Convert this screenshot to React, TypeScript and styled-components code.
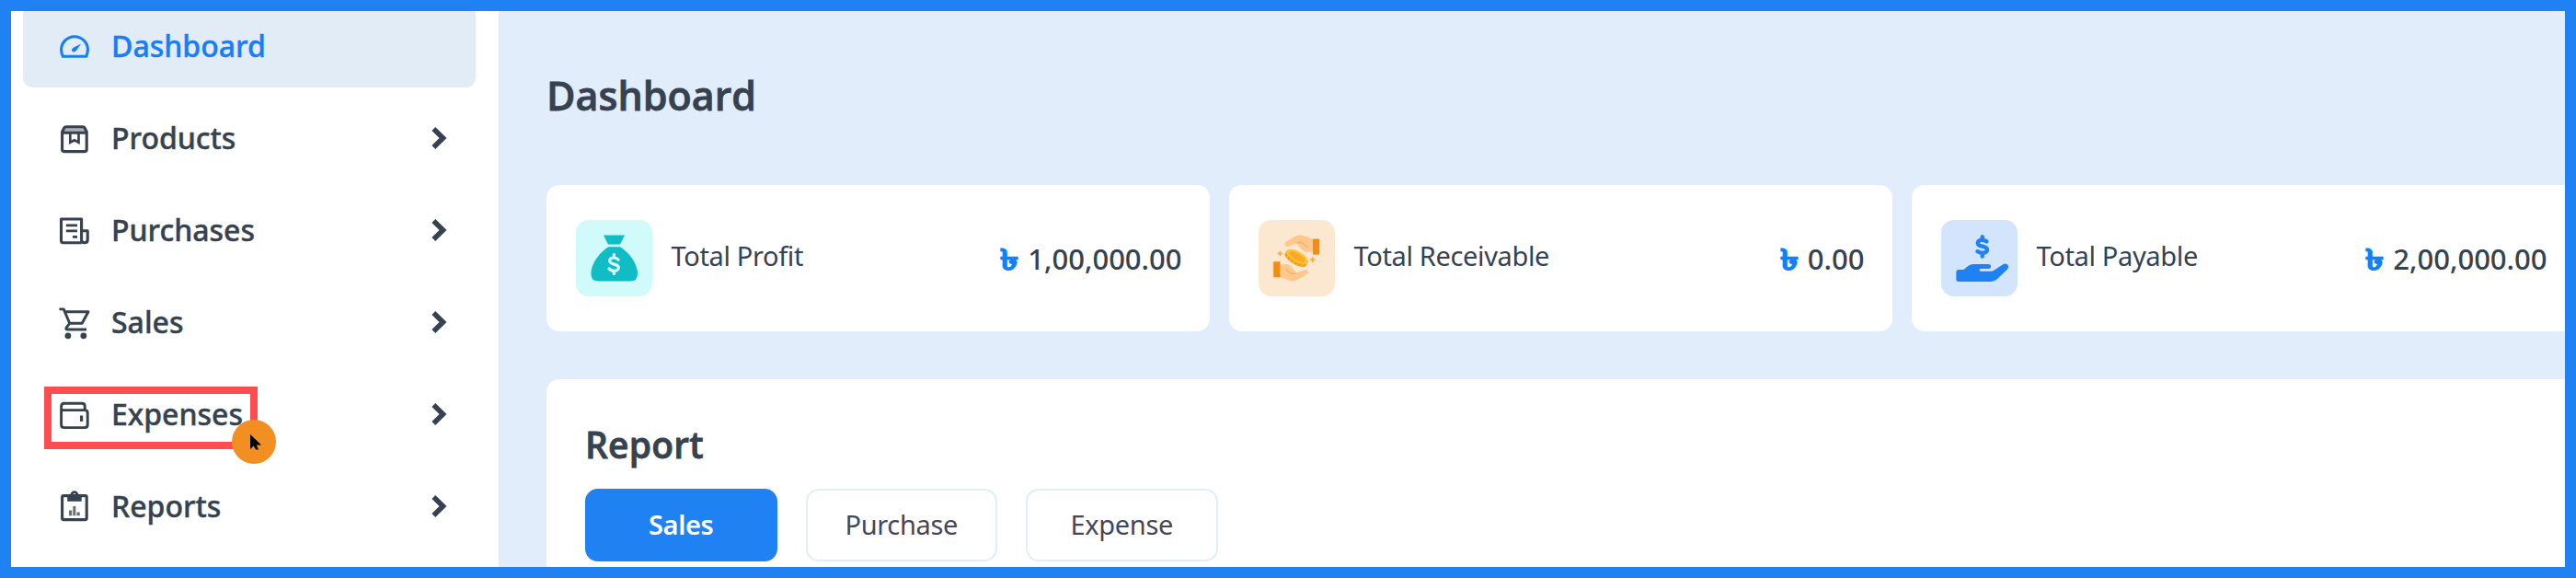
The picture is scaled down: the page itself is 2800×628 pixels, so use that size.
import React from "react";
import styled, { createGlobalStyle } from "styled-components";

const GlobalStyle = createGlobalStyle`
  * { box-sizing: border-box; }
  body { margin: 0; }
`;

const ink = "#36424f";
const blue = "#2082f2";

const Frame = styled.div`
  width: 2800px;
  height: 628px;
  border: 12px solid ${blue};
  display: flex;
  overflow: hidden;
  background: #fff;
  color: ${ink};
  font-family: "Noto Sans", "Open Sans", sans-serif;
`;

const Sidebar = styled.nav`
  flex: none;
  width: 531px;
  height: 604px;
  padding: 0 25px 0 13px;
  background: #fff;
  border-right: 1px solid #e6ebf0;
`;

const Menu = styled.div`
  display: flex;
  flex-direction: column;
  gap: 10px;
  margin-top: -7px;
`;

const MenuItem = styled.div<{ $active?: boolean }>`
  position: relative;
  flex: none;
  height: 90px;
  padding: 0 31px 0 38px;
  display: flex;
  align-items: center;
  border-radius: 10px;
  background: ${(p) => (p.$active ? "#e2ecf7" : "transparent")};
  color: ${(p) => (p.$active ? "#167dfb" : ink)};
`;

const MenuIcon = styled.svg`
  flex: none;
  width: 36px;
  height: 36px;
  overflow: visible;
`;

const MenuLabel = styled.span`
  flex: 1;
  margin-left: 22px;
  font-size: 32px;
  line-height: 44px;
  font-weight: 500;
  -webkit-text-stroke: 0.4px currentColor;
`;

const Chevron = styled.svg`
  flex: none;
  width: 18px;
  height: 26px;
`;

const Highlight = styled.div`
  position: absolute;
  left: 23px;
  top: 15px;
  width: 232px;
  height: 68px;
  border: 8px solid #ff4c51;
`;

const Pointer = styled.div`
  position: absolute;
  right: -28px;
  bottom: -24px;
  width: 48px;
  height: 48px;
  border-radius: 50%;
  background: #f28f22;

  svg {
    display: block;
  }
`;

const Main = styled.main`
  flex: none;
  width: 2245px;
  height: 604px;
  padding-left: 51px;
  background: #e1edfb;
  overflow: hidden;
`;

const PageTitle = styled.h1`
  margin: 0;
  height: 189px;
  padding-top: 62px;
  font-family: "Open Sans", "Noto Sans", sans-serif;
  font-size: 43px;
  line-height: 60px;
  font-weight: 600;
  -webkit-text-stroke: 0.8px currentColor;
`;

const Cards = styled.section`
  display: flex;
  gap: 21px;
`;

const Card = styled.article`
  flex: none;
  width: 721px;
  height: 159px;
  padding: 0 30.5px 0 31.5px;
  display: flex;
  align-items: center;
  border-radius: 14px;
  background: #fff;
`;

const Tile = styled.svg<{ $bg: string }>`
  flex: none;
  width: 83px;
  height: 83px;
  border-radius: 14px;
  background: ${(p) => p.$bg};
`;

const CardLabel = styled.span`
  flex: 1;
  margin: 0 0 6px 21px;
  font-size: 29px;
  line-height: 40px;
  letter-spacing: -0.35px;
`;

const Amount = styled.span`
  display: flex;
  align-items: baseline;
  font-size: 31px;
  line-height: 42px;
  font-weight: 500;
`;

const Currency = styled.span`
  color: #167dfb;
  font-weight: 700;
  -webkit-text-stroke: 1px #167dfb;
  transform: scaleX(1.3);
  transform-origin: right center;
  margin-right: 11px;
`;

const ReportPanel = styled.section`
  margin-top: 52px;
  width: 2240px;
  height: 260px;
  padding: 43px 0 0 42px;
  border-radius: 14px;
  background: #fff;
`;

const PanelTitle = styled.h2`
  margin: 0;
  height: 76px;
  font-family: "Open Sans", "Noto Sans", sans-serif;
  font-size: 39px;
  line-height: 56px;
  font-weight: 600;
  letter-spacing: 0.2px;
  -webkit-text-stroke: 0.8px currentColor;
`;

const Tabs = styled.div`
  display: flex;
  gap: 31px;
`;

const Tab = styled.button<{ $active?: boolean }>`
  width: 208.5px;
  height: 79px;
  padding: 0 0 2px;
  border: 2px solid ${(p) => (p.$active ? blue : "#e1edfb")};
  border-radius: 14px;
  background: ${(p) => (p.$active ? blue : "#fff")};
  color: ${(p) => (p.$active ? "#fff" : "#44475a")};
  font-family: inherit;
  font-size: 29px;
  line-height: 40px;
  letter-spacing: -0.35px;
  font-weight: ${(p) => (p.$active ? 600 : 400)};
`;

const line = {
  fill: "none",
  stroke: "currentColor",
  strokeWidth: 3.1,
  strokeLinejoin: "round" as const,
};

const GaugeIcon = () => (
  <MenuIcon viewBox="0 0 36 36">
    <path {...line} d="M5.3 29.3H30.7C31.8 27 32.4 24.6 32.4 22.1A14.4 14.4 0 0 0 3.6 22.1C3.6 24.6 4.2 27 5.3 29.3Z" />
    <path fill="currentColor" d="M25.2 15.6L20 22.8C18.8 24.7 16.6 25 15.6 23.8C14.5 22.6 15 20.8 16.7 19.8Z" />
  </MenuIcon>
);

const BoxIcon = () => (
  <MenuIcon viewBox="0 0 36 36">
    <path fill="currentColor" fillOpacity={0.4} d="M8 5.7H28L31 12H5Z" />
    <path {...line} d="M4.6 11.3L6.6 7.2Q7.3 5.7 9 5.7H26.8Q28.4 5.7 29.2 7.2L31.2 11.3V30.6Q31.2 32.6 29.2 32.6H6.6Q4.6 32.6 4.6 30.6ZM4.6 12.2H31.2" />
    <path {...line} strokeLinejoin="miter" strokeWidth={2.7} d="M13.3 12.5V22.8L17.9 20.2L22.5 22.8V12.5" />
  </MenuIcon>
);

const BillIcon = () => (
  <MenuIcon viewBox="0 0 36 36">
    <path {...line} d="M25.6 31.7H5.6Q3.5 31.7 3.5 29.6V6H25.6V28.4Q25.6 31.7 28.8 31.7Q32.2 31.7 32.2 28.4V18.7H25.6" />
    <path {...line} strokeWidth={2.7} d="M8.8 12.8H21M8.8 18.8H21M16 25.3H21" />
  </MenuIcon>
);

const CartIcon = () => (
  <MenuIcon viewBox="0 0 36 36">
    <path {...line} strokeWidth={2.9} d="M1.4 3.9H6.2L12.7 19.3H26.2L33 6.7H7.4M12.7 19.3L9 24.2Q8.3 26 10.4 26H31" />
    <circle cx="10.9" cy="32.8" r="3.4" fill="currentColor" />
    <circle cx="27.8" cy="32.8" r="3.4" fill="currentColor" />
  </MenuIcon>
);

const WalletIcon = () => (
  <MenuIcon viewBox="0 0 36 36">
    <path {...line} strokeWidth={2.9} d="M3.6 12.6V29.4Q3.6 32.6 6.8 32.6H29Q32.2 32.6 32.2 29.4V16.6Q32.2 13.6 29.2 13.6H5.4Q3.6 13.6 3.6 11V9.6Q3.6 6.3 6.8 6.3H26.2Q29.2 6.3 29.2 9.3V13.6" />
    <rect x="24" y="19.5" width="3.2" height="6.4" fill="currentColor" />
  </MenuIcon>
);

const ReportIcon = () => (
  <MenuIcon viewBox="0 0 36 36">
    <rect {...line} x="4.6" y="6.6" width="26.6" height="26" rx="1.6" />
    <path fill="currentColor" fillRule="evenodd" d="M10.2 5.3H13.3C13.8 3 15.6 1.2 17.9 1.2S22 3 22.5 5.3H25.7V12.7H10.2ZM17.9 4A1.6 1.6 0 1 0 17.9 7.2A1.6 1.6 0 1 0 17.9 4Z" />
    <path fill="currentColor" fillOpacity={0.75} d="M12 22.5H15.2V28.2H12ZM16.3 18H19.3V28.2H16.3ZM20.4 24.5H23.8V28.2H20.4Z" />
  </MenuIcon>
);

const MoneyBag = () => (
  <Tile $bg="#d1fbfb" viewBox="0 0 83 83">
    <path fill="#10bdc4" d="M30 16.4H53L48 26.4H35Z" />
    <path fill="#10bdc4" d="M35.5 29.2H47.8C57 34.5 67 47 67 58.5Q67 66.6 59 66.6H24.5Q16.4 66.6 16.4 58.5C16.4 47 26.5 34.5 35.5 29.2Z" />
    <path fill="none" stroke="#d9fbfb" strokeWidth="3.2" strokeLinecap="round" d="M41.4 37.5V41M41.4 55.5V58.5M46.2 43.2C44.8 41.6 43.2 41 41.4 41C38.6 41 36.7 42.4 36.7 44.5C36.7 49.3 46.4 46.9 46.4 51.6C46.4 54 44.2 55.4 41.4 55.4C39.3 55.4 37.4 54.7 36.1 53" />
  </Tile>
);

const CoinHand = ({ flipped }: { flipped?: boolean }) => (
  <g transform={flipped ? "rotate(180 41.2 41.4)" : undefined}>
    <path fill="#fdc88d" d="M59 20.8L52 18.2Q45.5 14.8 40 17.8L29.8 23.8Q27.4 25.6 29 28Q30.4 29.2 33 28.4L41 25.5L48.5 33.5Q51.5 35.4 55 34.6L59 34.8Z" />
    <path fill="none" stroke="#f2b271" strokeWidth="1.4" d="M42 24.5L46.5 24.2L53.5 30" />
    <rect x="59" y="20.6" width="7.2" height="17" fill="#f28c15" />
  </g>
);

const ExchangeHands = () => (
  <Tile $bg="#fce8d0" viewBox="0 0 83 83">
    <CoinHand />
    <CoinHand flipped />
    <g transform="rotate(30 41.2 41.4)">
      <ellipse cx="41.2" cy="42.8" rx="13.4" ry="5.6" fill="#f09a1c" />
      <ellipse cx="41.2" cy="39.8" rx="13.4" ry="5.8" fill="#fec12f" />
      <ellipse cx="41.2" cy="39.8" rx="9.6" ry="3.3" fill="#fba629" />
      <path stroke="#fec12f" strokeWidth="1.4" d="M32 44V47M36.5 45.5V48.4M41.2 45.8V48.6M46 45.5V48.4M50.5 44V47" />
    </g>
    <path fill="#fbb040" d="M23.4 33.2L24.8 35.6L27 36.4L24.8 37.6L23.4 40L22 37.6L19.8 36.4L22 35.6Z" />
    <path fill="#fbb040" d="M58.8 39.4L60.2 42L62.2 43L60.2 44.2L58.8 46.8L57.4 44.2L55.2 43L57.4 42Z" />
  </Tile>
);

const HandDollar = () => (
  <Tile $bg="#d2e5fc" viewBox="0 0 83 83">
    <path fill="none" stroke={blue} strokeWidth="4.4" strokeLinecap="round" strokeLinejoin="round" d="M44.7 18.2V21.8M44.7 36V39.6M49.4 23.4C47.6 22.3 46.2 21.8 44.3 21.8C41.5 21.8 39.7 23.2 39.7 25.2C39.7 29.8 50 27.6 50 32.3C50 34.6 47.8 35.9 44.9 35.9C42.8 35.9 41.2 35.2 39.4 34.2" />
    <path fill={blue} d="M18.6 54H24.2L29.6 49.8Q32 48 35 48H51.3Q54 48 54 50.5T51.3 53H42.8Q41.6 53 41.6 54.3T42.8 55.8H53.5Q56 55.8 58 54.2L67.2 48.2Q70 46.6 72 48.6Q74.2 51 72 53.4L60.8 64.2Q58 67 54 67H19Q16.3 67 16.3 64.5V56.5Q16.3 54 18.6 54Z" />
  </Tile>
);

const menu = [
  { label: "Dashboard", Icon: GaugeIcon, active: true },
  { label: "Products", Icon: BoxIcon },
  { label: "Purchases", Icon: BillIcon },
  { label: "Sales", Icon: CartIcon },
  { label: "Expenses", Icon: WalletIcon, marked: true },
  { label: "Reports", Icon: ReportIcon },
];

const totals = [
  { label: "Total Profit", amount: "1,00,000.00", Icon: MoneyBag },
  { label: "Total Receivable", amount: "0.00", Icon: ExchangeHands },
  { label: "Total Payable", amount: "2,00,000.00", Icon: HandDollar },
];

export default function App() {
  return (
    <>
      <GlobalStyle />
      <Frame>
        <Sidebar>
          <Menu>
            {menu.map(({ label, Icon, active, marked }) => (
              <MenuItem key={label} $active={active}>
                <Icon />
                <MenuLabel>{label}</MenuLabel>
                {!active && (
                  <Chevron viewBox="0 0 18 26">
                    <path d="M3.3 3L13.5 13L3.3 23" fill="none" stroke="currentColor" strokeWidth="5.6" />
                  </Chevron>
                )}
                {marked && (
                  <Highlight>
                    <Pointer>
                      <svg width="48" height="48" viewBox="0 0 48 48">
                        <path d="M20 16V32L23.6 28.6L26.2 32.4H29L26.8 27.4H32Z" fill="#000" />
                      </svg>
                    </Pointer>
                  </Highlight>
                )}
              </MenuItem>
            ))}
          </Menu>
        </Sidebar>
        <Main>
          <PageTitle>Dashboard</PageTitle>
          <Cards>
            {totals.map(({ label, amount, Icon }) => (
              <Card key={label}>
                <Icon />
                <CardLabel>{label}</CardLabel>
                <Amount>
                  <Currency>৳</Currency>
                  {amount}
                </Amount>
              </Card>
            ))}
          </Cards>
          <ReportPanel>
            <PanelTitle>Report</PanelTitle>
            <Tabs>
              <Tab $active>Sales</Tab>
              <Tab>Purchase</Tab>
              <Tab>Expense</Tab>
            </Tabs>
          </ReportPanel>
        </Main>
      </Frame>
    </>
  );
}
